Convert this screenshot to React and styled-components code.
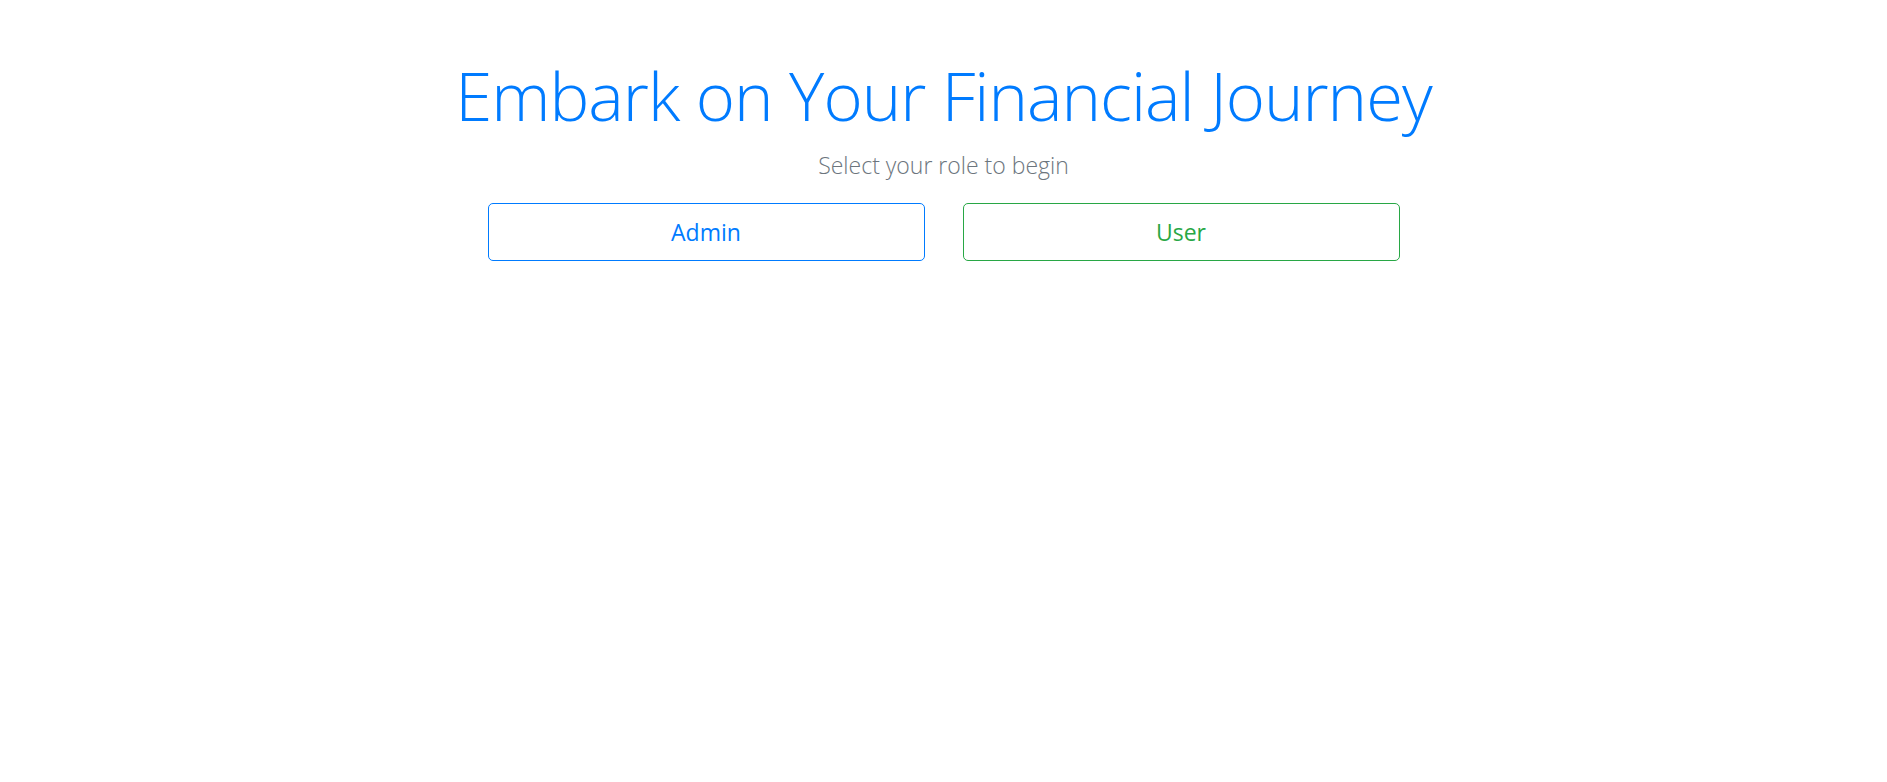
import React from 'react'
import styled, { createGlobalStyle } from 'styled-components'

const GlobalStyle = createGlobalStyle`
  html, body {
    margin: 0;
    padding: 0;
    background: #fff;
  }
  body {
    font-family: "Open Sans", "Liberation Sans", sans-serif;
  }
`

const Page = styled.div`
  display: flex;
  flex-direction: column;
  align-items: center;
  padding-top: 55px;
`

const Title = styled.h1`
  margin: 0;
  font-size: 67px;
  font-weight: 300;
  line-height: 80px;
  letter-spacing: -1px;
  color: #007bff;
`

const Lead = styled.p`
  margin: 13px 0 0;
  font-size: 23px;
  font-weight: 300;
  line-height: 34px;
  color: #6c757d;
`

const Choices = styled.div`
  display: flex;
  gap: 38px;
  margin-top: 21px;
`

const RoleButton = styled.button`
  width: 437px;
  height: 58px;
  background: #fff;
  border: 1px solid ${p => p.color};
  border-radius: 5px;
  color: ${p => p.color};
  font-family: "Open Sans", "Liberation Sans", sans-serif;
  font-size: 23px;
  font-weight: 400;
  cursor: pointer;
  &:hover {
    background: ${p => p.color};
    color: #fff;
  }
`

export default function App() {
  return (
    <>
      <GlobalStyle />
      <Page>
        <Title>Embark on Your Financial Journey</Title>
        <Lead>Select your role to begin</Lead>
        <Choices>
          <RoleButton color="#007bff">Admin</RoleButton>
          <RoleButton color="#28a745">User</RoleButton>
        </Choices>
      </Page>
    </>
  )
}
